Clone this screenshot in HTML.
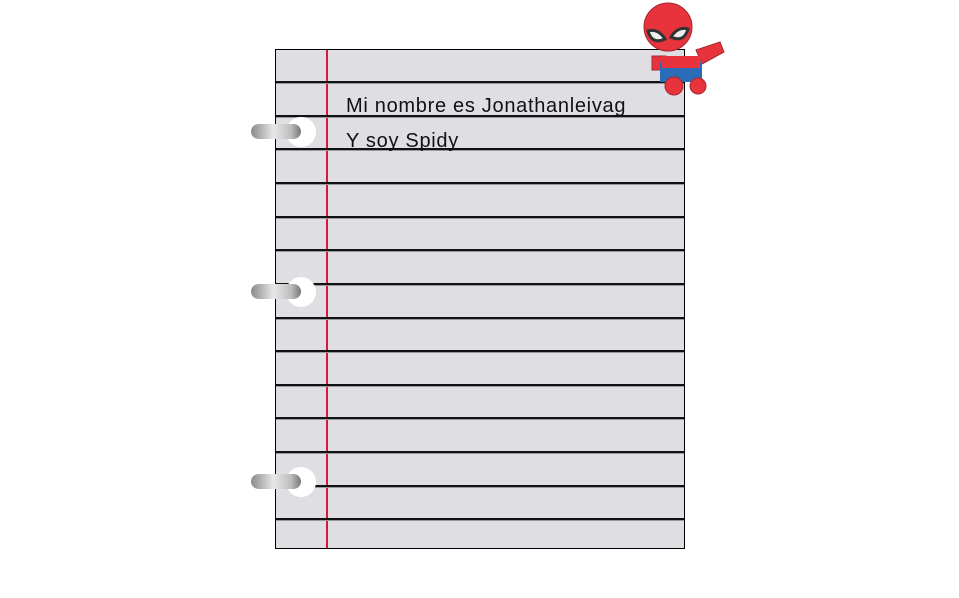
<!DOCTYPE html>
<html><head><style>
body{margin:0;width:959px;height:598px;background:#fff;position:relative;overflow:hidden;font-family:"Liberation Sans",sans-serif}
.paper{position:absolute;left:275px;top:49px;width:408px;height:498px;border:1px solid #000;background:#dfdee3;overflow:hidden}
.line{position:absolute;left:0;width:100%;height:2px;background:#111;border-bottom:1px solid #9a9a9e}
.margin{position:absolute;left:50px;top:0;width:2px;height:100%;background:#d8173a}
.hole{position:absolute;width:30px;height:30px;border-radius:50%;background:#fff}
.ring{position:absolute;left:251px;width:50px;height:15px;border-radius:8px;background:linear-gradient(90deg,#8a8a8a,#e8e8e8 45%,#bdbdbd 80%,#777)}
.t{position:absolute;left:346px;font-size:20px;color:#111;letter-spacing:0.7px}
</style></head><body>
<div class="paper">
<div class="margin"></div>
<div class="line" style="top:31px"></div><div class="line" style="top:65px"></div><div class="line" style="top:98px"></div><div class="line" style="top:132px"></div><div class="line" style="top:166px"></div><div class="line" style="top:199px"></div><div class="line" style="top:233px"></div><div class="line" style="top:267px"></div><div class="line" style="top:300px"></div><div class="line" style="top:334px"></div><div class="line" style="top:367px"></div><div class="line" style="top:401px"></div><div class="line" style="top:435px"></div><div class="line" style="top:468px"></div>
</div>
<div class="hole" style="left:286px;top:117px"></div>
<div class="hole" style="left:286px;top:277px"></div>
<div class="hole" style="left:286px;top:467px"></div>
<div class="ring" style="top:124px"></div>
<div class="ring" style="top:284px"></div>
<div class="ring" style="top:474px"></div>
<div class="t" style="top:95px">Mi nombre es Jonathanleivag</div>
<div class="t" style="top:130px">Y soy Spidy</div>
<svg style="position:absolute;left:630px;top:0" width="100" height="100" viewBox="0 0 100 100">
<path d="M66 50 l24 -8 l4 10 l-22 12z" fill="#e8333d" stroke="#a02a30"/>
<rect x="22" y="56" width="14" height="14" fill="#e8333d" stroke="#a02a30"/>
<path d="M30 62 h42 v20 h-42z" fill="#2b6cb8"/>
<path d="M32 56 h38 v12 h-38z" fill="#e8333d"/>
<circle cx="44" cy="86" r="9" fill="#e8333d" stroke="#a02a30"/>
<circle cx="68" cy="86" r="8" fill="#e8333d" stroke="#a02a30"/>
<circle cx="38" cy="27" r="24" fill="#e8333d" stroke="#a02a30"/>
<path d="M18 31 q10 -3 17 8 q-13 6 -17 -8z" fill="#eee" stroke="#333" stroke-width="3"/>
<path d="M58 29 q-10 -3 -17 8 q13 6 17 -8z" fill="#eee" stroke="#333" stroke-width="3"/>
</svg>
</body></html>
